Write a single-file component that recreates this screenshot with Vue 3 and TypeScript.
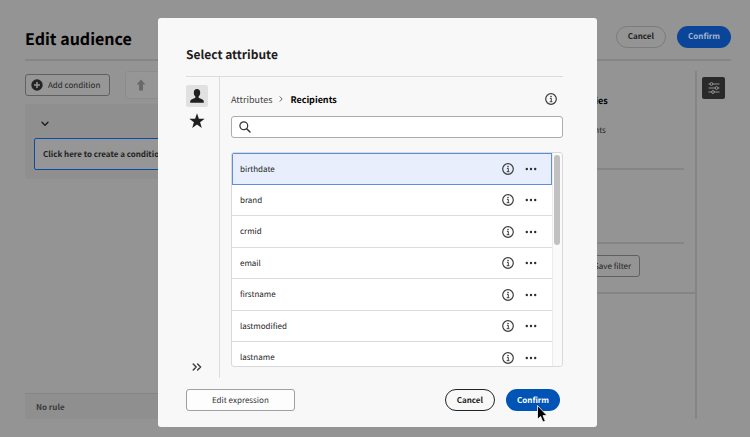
<script setup lang="ts">
import { ref } from 'vue'

const attributes: string[] = ['birthdate', 'brand', 'crmid', 'email', 'firstname', 'lastmodified', 'lastname']
const selected = ref<string>('birthdate')
const query = ref<string>('')
</script>

<template>
  <div class="page">
    <header class="page-head">
      <h1>Edit audience</h1>
      <div class="actions">
        <button type="button" class="pill dim-outline">Cancel</button>
        <button type="button" class="pill dim-accent">Confirm</button>
      </div>
    </header>

    <div class="page-body">
      <main class="builder">
        <div class="toolbar">
          <button type="button" class="add">
            <svg width="12" height="12" viewBox="0 0 12 12" aria-hidden="true">
              <circle cx="6" cy="6" r="5.7" fill="#242424" />
              <path d="M6 3v6M3 6h6" stroke="#969696" stroke-width="1.5" />
            </svg>
            Add condition
          </button>
          <div class="tools">
            <button type="button" class="tool" aria-label="Move up">
              <svg width="10" height="12" viewBox="0 0 10 12" aria-hidden="true">
                <path d="M5 .4 9.4 5.6H7V11.4H3V5.6H.6Z" fill="#696969" />
              </svg>
            </button>
          </div>
        </div>
        <section class="group">
          <button type="button" class="collapse" aria-label="Collapse group">
            <svg width="8" height="6" viewBox="0 0 8 6" aria-hidden="true">
              <path d="M1 1.2 4 4.3 7 1.2" fill="none" stroke="#202020" stroke-width="1.4" stroke-linecap="round" stroke-linejoin="round" />
            </svg>
          </button>
          <button type="button" class="create">Click here to create a condition</button>
        </section>
        <div class="rule">No rule</div>
      </main>

      <aside class="panel">
        <div class="props">
          <h2>Properties</h2>
          <p>Recipients</p>
        </div>
        <div class="blank"></div>
        <div class="save-row">
          <button type="button" class="save">Save filter</button>
        </div>
      </aside>

      <nav class="rail">
        <button type="button" class="rail-button" aria-label="Settings">
          <svg width="12" height="12" viewBox="0 0 12 12" fill="none" stroke="#a0a0a0" aria-hidden="true">
            <path d="M.5 2H2M5 2h6.5M.5 6H7M10 6h1.5M.5 10H3.5M6.5 10h5" stroke-width=".9" />
            <circle cx="3.5" cy="2" r="1.4" stroke-width=".9" />
            <circle cx="8.5" cy="6" r="1.4" stroke-width=".9" />
            <circle cx="5" cy="10" r="1.4" stroke-width=".9" />
          </svg>
        </button>
      </nav>
    </div>
  </div>

  <div class="overlay">
    <section class="dialog" role="dialog" aria-modal="true" aria-labelledby="dialog-title">
      <h2 id="dialog-title" class="dialog-title">Select attribute</h2>
      <div class="dialog-body">
        <nav class="tabs">
          <button type="button" class="tab active" aria-label="Attributes">
            <svg width="16" height="16" viewBox="0 0 16 16" aria-hidden="true">
              <path d="M8 1C5.900 1 4.700 2.500 4.800 4.700C4.850 6.300 5.500 7.600 6.300 8.500C6.600 8.900 6.500 9.700 5.900 9.900C3.300 10.700 1.200 11.600 1.200 13.400V14.800H14.800V13.400C14.800 11.600 12.700 10.700 10.100 9.900C9.500 9.700 9.400 8.900 9.700 8.500C10.500 7.600 11.150 6.300 11.200 4.700C11.300 2.500 10.100 1 8 1Z" fill="#1f1f1f" />
            </svg>
          </button>
          <button type="button" class="tab" aria-label="Favorites">
            <svg width="16" height="16" viewBox="0 0 16 16" aria-hidden="true">
              <path d="M8 .2 9.900 5.700 15.700 5.800 11.100 9.300 12.800 14.900 8 11.600 3.200 14.900 4.900 9.300 .3 5.800 6.100 5.700Z" fill="#1f1f1f" />
            </svg>
          </button>
          <button type="button" class="tab expand" aria-label="Expand">
            <svg width="10" height="8" viewBox="0 0 10 8" aria-hidden="true">
              <path d="M1.200 1 4.200 4 1.200 7M5.600 1 8.600 4 5.600 7" fill="none" stroke="#3a3a3a" stroke-width="1.400" stroke-linecap="round" stroke-linejoin="round" />
            </svg>
          </button>
        </nav>

        <div class="content">
          <div class="crumbs">
            <a href="#">Attributes</a>
            <svg width="4" height="6" viewBox="0 0 4 6" aria-hidden="true">
              <path d="M.7 .5 3.200 3 .7 5.500" fill="none" stroke="#666" stroke-width="1" />
            </svg>
            <strong>Recipients</strong>
            <button type="button" class="icon crumb-info" aria-label="Info">
              <svg width="12" height="12" viewBox="0 0 12 12" aria-hidden="true">
                <circle cx="6" cy="6" r="5.300" fill="none" stroke="#3c3c3c" stroke-width="1.200" />
                <circle cx="6" cy="3.600" r=".8" fill="#3c3c3c" />
                <path d="M4.900 5.400H6.300V8.600M4.700 8.700H7.400" fill="none" stroke="#3c3c3c" stroke-width="1" />
              </svg>
            </button>
          </div>

          <label class="search">
            <svg width="12" height="12" viewBox="0 0 12 12" aria-hidden="true">
              <circle cx="4.800" cy="4.800" r="3.900" fill="none" stroke="#333" stroke-width="1.200" />
              <path d="M7.700 7.700 11 11" stroke="#333" stroke-width="1.500" stroke-linecap="round" />
            </svg>
            <input v-model="query" type="text" aria-label="Search" />
          </label>

          <div class="list">
            <ul class="rows">
              <li v-for="name in attributes" :key="name" class="row" :class="{ selected: name === selected }">
                <button type="button" class="name" @click="selected = name">{{ name }}</button>
                <button type="button" class="icon" aria-label="Info">
                  <svg width="12" height="12" viewBox="0 0 12 12" aria-hidden="true">
                    <circle cx="6" cy="6" r="5.300" fill="none" stroke="#3c3c3c" stroke-width="1.200" />
                    <circle cx="6" cy="3.600" r=".8" fill="#3c3c3c" />
                    <path d="M4.900 5.400H6.300V8.600M4.700 8.700H7.400" fill="none" stroke="#3c3c3c" stroke-width="1" />
                  </svg>
                </button>
                <button type="button" class="icon" aria-label="More actions">
                  <svg width="12" height="4" viewBox="0 0 12 4" fill="#2e2e2e" aria-hidden="true">
                    <circle cx="1.800" cy="2" r="1.200" />
                    <circle cx="6" cy="2" r="1.200" />
                    <circle cx="10.200" cy="2" r="1.200" />
                  </svg>
                </button>
              </li>
            </ul>
            <div class="track"><div class="thumb"></div></div>
          </div>
        </div>
      </div>

      <footer class="dialog-foot">
        <button type="button" class="edit">Edit expression</button>
        <div class="actions">
          <button type="button" class="pill outline">Cancel</button>
          <button type="button" class="pill accent">
            Confirm
            <svg class="cursor" width="12" height="20" viewBox="0 0 12 20" aria-hidden="true">
              <path d="M1.500 1.500V15.200L4.600 12.400L6.900 18L9.300 17L7 11.600H11Z" fill="#000" stroke="#fff" stroke-width=".8" />
            </svg>
          </button>
        </div>
      </footer>
    </section>
  </div>
</template>

<style>
body {
  background: #949494;
}
</style>

<style scoped>
.page,
.overlay {
  font-family: 'Noto Sans CJK SC', 'Noto Sans', sans-serif;
  font-size: 8px;
  line-height: 15px;
  text-rendering: geometricPrecision;
  color: #222;
}
.page *,
.overlay * {
  box-sizing: border-box;
}
h1,
h2,
p,
ul {
  margin: 0;
  padding: 0;
}
button,
input {
  margin: 0;
  padding: 0;
  border: 0;
  background: none;
  font: inherit;
  color: inherit;
  text-rendering: inherit;
}
svg {
  display: block;
  flex: none;
}
.page {
  box-sizing: border-box;
  min-height: 100vh;
  padding: 0 19px 18px 25px;
  display: flex;
  flex-direction: column;
  background: #949494;
}
.page-head {
  display: flex;
  align-items: center;
  justify-content: space-between;
  padding: 19px 0 5px;
  border-bottom: 2px solid #858585;
}
h1 {
  padding-top: 4px;
  font-size: 16px;
  line-height: 31px;
  color: #000;
}
.actions {
  display: flex;
  gap: 11px;
}
.pill {
  position: relative;
  height: 22px;
  padding: 0 11px;
  border-radius: 11px;
  font-weight: 700;
}
.dim-outline {
  border: 1px solid #7c7c7c;
  color: #222;
}
.dim-accent {
  background: #0a459a;
  color: #a5b4cb;
}
.page-body {
  flex: 1;
  display: flex;
  padding-top: 10px;
}
.builder {
  flex: 1;
  min-width: 0;
  display: flex;
  flex-direction: column;
}
.toolbar {
  display: flex;
  align-items: center;
  gap: 15px;
}
.add {
  display: flex;
  align-items: center;
  gap: 5px;
  height: 22px;
  padding: 0 9px 0 5px;
  border: 1px solid #606060;
  border-radius: 3px;
  background: #969696;
}
.tools {
  flex: 1;
  height: 28px;
  display: flex;
  align-items: center;
  padding: 0 10px;
  border: 1px solid #8c8c8c;
  border-radius: 3px;
  background: #969696;
}
.group {
  margin-top: 5px;
  padding: 9px;
  display: flex;
  flex-direction: column;
  align-items: stretch;
  border-radius: 3px;
  background: #8f8f8f;
}
.collapse {
  align-self: flex-start;
  padding: 8px 7px 11px;
}
.create {
  height: 32px;
  padding: 0 8px;
  border: 1px solid #0b4aa5;
  border-radius: 2px;
  background: #969696;
  font-weight: 700;
  text-align: left;
}
.rule {
  margin-top: auto;
  padding: 6px 11px 4px;
  border-top: 1px solid #868686;
  background: #8f8f8f;
  font-weight: 700;
  color: #3a3a3a;
}
.panel {
  width: 142px;
  border-right: 2px solid #858585;
}
.props,
.blank {
  margin-right: 11px;
  border-bottom: 2px solid #858585;
}
.props {
  height: 99px;
  padding: 22px 0 0 6px;
}
.props h2 {
  font-size: 9px;
  color: #000;
}
.props p {
  padding: 15px 0 0 6px;
}
.blank {
  height: 74px;
}
.save-row {
  padding: 11px 0 15px;
  border-bottom: 2px solid #858585;
}
.save {
  height: 22px;
  padding: 0 8px;
  margin-left: 30px;
  border: 1px solid #606060;
  border-radius: 3px;
}
.rail {
  padding: 6px 6px 0 5px;
}
.rail-button {
  display: flex;
  align-items: center;
  justify-content: center;
  width: 23px;
  height: 22px;
  border-radius: 2px;
  background: #292929;
}
.overlay {
  position: fixed;
  inset: 0;
  box-sizing: border-box;
  display: flex;
  align-items: flex-start;
  padding: 18px 153px 10px 158px;
}
.dialog {
  flex: 1;
  min-width: 0;
  padding: 0 34px 16px 28px;
  border-radius: 3px;
  background: #f8f8f8;
}
.dialog-title {
  padding: 27px 0 11px;
  font-size: 12px;
  line-height: 20px;
  color: #1c1c1c;
}
.dialog-body {
  display: flex;
  border-top: 1px solid #dcdcdc;
}
.tabs {
  width: 34px;
  display: flex;
  flex-direction: column;
  gap: 3px;
  padding-top: 8px;
  border-right: 1px solid #dcdcdc;
}
.tab {
  display: flex;
  align-items: center;
  justify-content: center;
  width: 22px;
  height: 22px;
  border-radius: 2px;
}
.active {
  background: #e1e1e1;
}
.expand {
  margin-top: auto;
}
.content {
  flex: 1;
  min-width: 0;
  padding: 14px 0 11px 11px;
}
.crumbs {
  display: flex;
  align-items: center;
  gap: 7px;
  height: 16px;
  font-size: 9px;
}
.crumbs a {
  color: #444;
  text-decoration: none;
}
.crumbs strong {
  color: #000;
}
.crumb-info {
  margin: 0 6px 0 auto;
}
.search {
  display: flex;
  align-items: center;
  gap: 6px;
  height: 22px;
  margin: 9px 0 14px;
  padding: 0 7px;
  border: 1px solid #acacac;
  border-radius: 3px;
  background: #fff;
}
.search input {
  flex: 1;
  min-width: 0;
  outline: none;
}
.list {
  display: flex;
  height: 215px;
  overflow: hidden;
  border: 1px solid #d9d9d9;
  border-radius: 3px;
  background: #fff;
}
.rows {
  flex: 1;
  min-width: 0;
  list-style: none;
}
.row {
  display: flex;
  align-items: center;
  gap: 11px;
  height: 31px;
  padding: 0 15px 0 8px;
  border-bottom: 1px solid #dcdcdc;
}
.row:nth-child(odd) {
  height: 32px;
}
.selected {
  padding: 0 14px 0 7px;
  border: 1px solid #5b8de0;
  background: #e8eefc;
}
.name {
  flex: 1;
  text-align: left;
}
.track {
  width: 10px;
  padding: 2px 1px;
  border-left: 1px solid #ececec;
  background: #fafafa;
}
.thumb {
  width: 6px;
  height: 90px;
  border-radius: 3px;
  background: #c1c1c1;
}
.dialog-foot {
  display: flex;
  align-items: center;
  justify-content: space-between;
  padding: 11px 3px 0 0;
}
.edit {
  height: 22px;
  padding: 0 25px;
  border: 1px solid #a0a0a0;
  border-radius: 3px;
  background: #fdfdfd;
  color: #333;
}
.outline {
  border: 1px solid #222;
}
.accent {
  background: #0054b6;
  color: #fff;
}
.cursor {
  position: absolute;
  left: 30px;
  top: 15px;
}
</style>
